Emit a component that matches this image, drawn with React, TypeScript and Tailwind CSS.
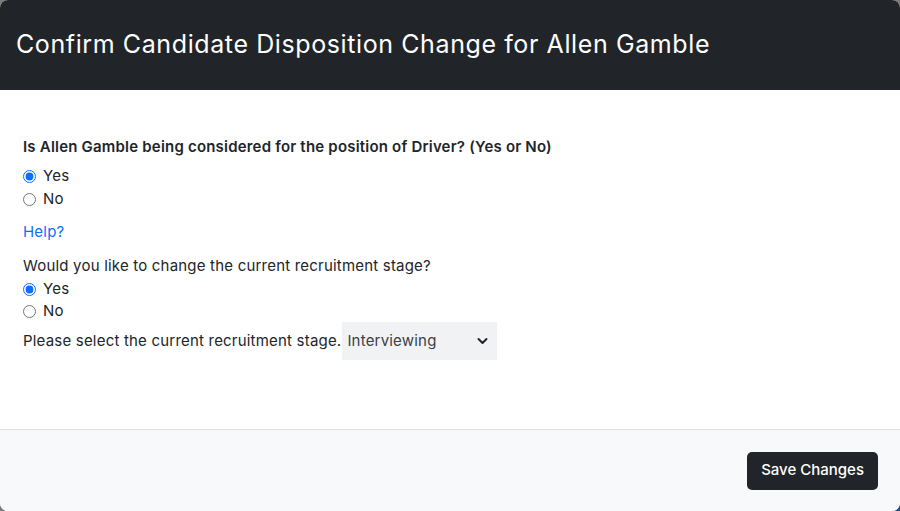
import { useState } from 'react'

export default function App() {
  const [considered, setConsidered] = useState<'yes' | 'no'>('yes')
  const [changeStage, setChangeStage] = useState<'yes' | 'no'>('yes')
  const [stage, setStage] = useState('Interviewing')

  return (
    <div
      className="relative w-[900px] h-[511px] bg-[#7b7b7b] overflow-hidden"
      style={{ fontFamily: 'Inter, "Noto Sans", sans-serif' }}
    >
      <div className="absolute right-0 bottom-0 w-4 h-4 bg-[#1d4f91]" />
      <div className="relative flex flex-col h-full rounded-lg overflow-hidden bg-white">
        <div className="h-[90px] shrink-0 bg-[#212529] flex items-center px-4">
          <h1 className="text-[25px] text-white tracking-[0.6px]">
            Confirm Candidate Disposition Change for Allen Gamble
          </h1>
        </div>

        <div className="flex-1 px-[23px] pt-[46px] text-[15px] text-[#212529] tracking-[0.2px]">
          <p className="font-semibold leading-[22px] mb-[7px]">
            Is Allen Gamble being considered for the position of Driver? (Yes or No)
          </p>
          <label className="flex items-center gap-[7px] h-[23px]">
            <input
              type="radio"
              name="considered"
              checked={considered === 'yes'}
              onChange={() => setConsidered('yes')}
              className="w-[13px] h-[13px] accent-[#0d6efd]"
            />
            Yes
          </label>
          <label className="flex items-center gap-[7px] h-[23px]">
            <input
              type="radio"
              name="considered"
              checked={considered === 'no'}
              onChange={() => setConsidered('no')}
              className="w-[13px] h-[13px] accent-[#0d6efd]"
            />
            No
          </label>
          <a href="#" className="block mt-[10px] leading-[22px] text-[#0d6efd]">
            Help?
          </a>
          <p className="mt-[12px] leading-[22px]">Would you like to change the current recruitment stage?</p>
          <label className="flex items-center gap-[7px] h-[22px] mt-[1px]">
            <input
              type="radio"
              name="stage"
              checked={changeStage === 'yes'}
              onChange={() => setChangeStage('yes')}
              className="w-[13px] h-[13px] accent-[#0d6efd]"
            />
            Yes
          </label>
          <label className="flex items-center gap-[7px] h-[23px]">
            <input
              type="radio"
              name="stage"
              checked={changeStage === 'no'}
              onChange={() => setChangeStage('no')}
              className="w-[13px] h-[13px] accent-[#0d6efd]"
            />
            No
          </label>
          <div className="flex items-center -mt-[1px]">
            <span>Please select the current recruitment stage.</span>
            <div className="relative ml-[1px] w-[155px] h-[38px] bg-[#f1f2f4]">
              <select
                value={stage}
                onChange={(e) => setStage(e.target.value)}
                className="appearance-none w-full h-full bg-transparent pl-[5px] pr-8 text-[15px] text-[#3a3f44] tracking-[0.2px] outline-none"
              >
                <option>Applied</option>
                <option>Screening</option>
                <option>Interviewing</option>
                <option>Offer</option>
                <option>Hired</option>
              </select>
              <svg
                className="absolute right-[9px] top-1/2 -translate-y-1/2 pointer-events-none"
                width="11"
                height="8"
                viewBox="0 0 11 8"
                fill="none"
              >
                <path d="M1.5 2 L5.5 6 L9.5 2" stroke="#212529" strokeWidth="2" strokeLinecap="round" strokeLinejoin="round" />
              </svg>
            </div>
          </div>
        </div>

        <div className="h-[82px] shrink-0 bg-[#f8f9fa] border-t border-[#dee2e6] flex items-center justify-end pr-[22px]">
          <button className="h-[38px] px-[14px] rounded-[5px] bg-[#212529] text-white text-[15px] font-medium">
            Save Changes
          </button>
        </div>
      </div>
    </div>
  )
}
